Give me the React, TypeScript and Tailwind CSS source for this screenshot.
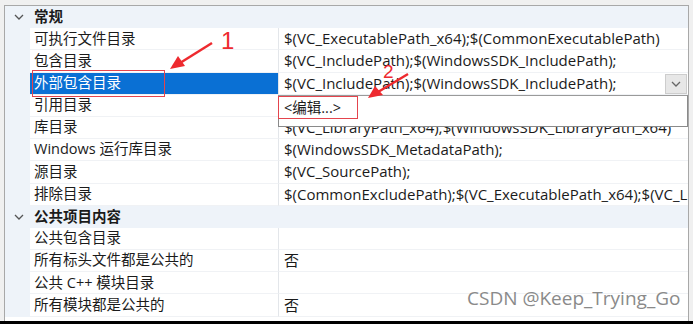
import React from 'react';

type Row = { kind: 'header'; label: string } | { kind: 'item'; label: string; value: string; selected?: boolean };

const rows: Row[] = [
  { kind: 'header', label: '常规' },
  { kind: 'item', label: '可执行文件目录', value: '$(VC_ExecutablePath_x64);$(CommonExecutablePath)' },
  { kind: 'item', label: '包含目录', value: '$(VC_IncludePath);$(WindowsSDK_IncludePath);' },
  { kind: 'item', label: '外部包含目录', value: '$(VC_IncludePath);$(WindowsSDK_IncludePath);', selected: true },
  { kind: 'item', label: '引用目录', value: '' },
  { kind: 'item', label: '库目录', value: '$(VC_LibraryPath_x64);$(WindowsSDK_LibraryPath_x64)' },
  { kind: 'item', label: 'Windows 运行库目录', value: '$(WindowsSDK_MetadataPath);' },
  { kind: 'item', label: '源目录', value: '$(VC_SourcePath);' },
  { kind: 'item', label: '排除目录', value: '$(CommonExcludePath);$(VC_ExecutablePath_x64);$(VC_LibraryPath_x64)' },
  { kind: 'header', label: '公共项目内容' },
  { kind: 'item', label: '公共包含目录', value: '' },
  { kind: 'item', label: '所有标头文件都是公共的', value: '否' },
  { kind: 'item', label: '公共 C++ 模块目录', value: '' },
  { kind: 'item', label: '所有模块都是公共的', value: '否' },
];

function Chevron({ className }: { className?: string }) {
  return (
    <svg width="10" height="6" viewBox="0 0 10 6" className={className}>
      <polyline points="1,1 5,5 9,1" fill="none" stroke="currentColor" strokeWidth="1.3" />
    </svg>
  );
}

export default function App() {
  return (
    <div
      className="relative w-[693px] h-[324px] overflow-hidden bg-[#f0f0f0] text-[#1b1b1b]"
      style={{ fontFamily: '"Open Sans", "Noto Sans CJK SC", sans-serif' }}
    >
      <div className="pt-[5px] pl-[4px] pr-[4px]">
        <div className="h-[316px] bg-white border-l border-t border-r border-[#a8a8a8] overflow-hidden">
          {rows.map((r, i) =>
            r.kind === 'header' ? (
              <div key={i} className="flex items-center h-[22.2px] bg-[#eef3f9]">
                <div className="w-[25px] flex justify-center pl-[2px]">
                  <Chevron className="text-[#555]" />
                </div>
                <span className="pl-[4px] text-[14.5px] font-bold leading-none">{r.label}</span>
              </div>
            ) : (
              <div key={i} className="flex h-[22.2px]">
                <div className="w-[25px] bg-[#eef3f9] shrink-0" />
                <div
                  className={`w-[248px] shrink-0 flex items-center pl-[4px] border-b border-[#f0f2f5] text-[14.5px] leading-none whitespace-nowrap ${
                    r.selected ? 'bg-[#0a70d4] text-white' : ''
                  }`}
                >
                  {r.label}
                </div>
                <div className="flex-1 min-w-0 flex items-center pl-[5px] border-l border-[#e3e6ea] border-b border-b-[#f0f2f5] text-[15px] leading-none whitespace-nowrap overflow-hidden relative">
                  {r.value}
                  {r.selected && (
                    <div className="absolute right-[1px] top-[1px] w-[22px] h-[20px] bg-[#e7e7e7] border border-[#cdcdcd] flex items-center justify-center">
                      <Chevron className="text-[#666]" />
                    </div>
                  )}
                </div>
              </div>
            )
          )}
        </div>
      </div>
      <div className="h-[3px] bg-black" />

      {/* dropdown popup */}
      <div className="absolute left-[278px] top-[95px] w-[410px] h-[32px] bg-white border border-[#8a8a8a] border-t-[#9a9a9a] border-t-dotted">
        <div className="pl-[5px] pt-[3px] text-[14.5px] leading-[18px]">&lt;编辑...&gt;</div>
      </div>

      {/* annotations */}
      <div className="absolute left-[32px] top-[70px] w-[133px] h-[27px] border-[1.5px] border-[#e4444d]" />
      <div className="absolute left-[278px] top-[96px] w-[80px] h-[23px] border-[1.5px] border-[#e4444d]" />
      <svg className="absolute left-0 top-0" width="693" height="324">
        <line x1="212" y1="43" x2="180" y2="63" stroke="#ee2a2f" strokeWidth="2.5" />
        <polygon points="170,69 178,56 185,66" fill="#ee2a2f" />
        <line x1="408" y1="74" x2="378" y2="92" stroke="#ee2a2f" strokeWidth="2.5" />
        <polygon points="368,98 375,86 383,95" fill="#ee2a2f" />
      </svg>
      <div className="absolute left-[221px] top-[29px] text-[24px] leading-none text-[#ee2a2f]" style={{ fontFamily: '"Liberation Sans", sans-serif' }}>1</div>
      <div className="absolute left-[383px] top-[62px] text-[19px] leading-none text-[#ee2a2f]" style={{ fontFamily: '"Liberation Sans", sans-serif' }}>2</div>

      <div className="absolute left-[467px] top-[289px] text-[19px] leading-none text-[#8a8a8a]" style={{ fontFamily: '"Open Sans", sans-serif' }}>
        CSDN @Keep_Trying_Go
      </div>
    </div>
  );
}
